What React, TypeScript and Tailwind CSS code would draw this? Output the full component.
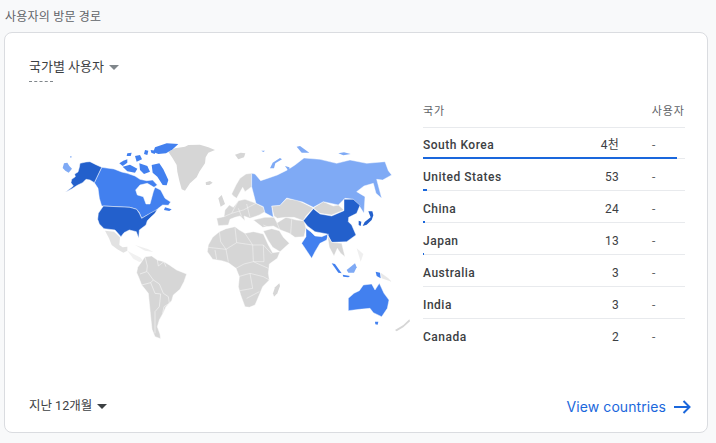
const GRAY = "#d6d6d6";
const LIGHT = "#7faaf5";
const MID = "#4280ef";
const DARK = "#2360cc";

const rows = [
  { name: "South Korea", value: "4천", bar: 254 },
  { name: "United States", value: "53", bar: 4 },
  { name: "China", value: "24", bar: 2 },
  { name: "Japan", value: "13", bar: 1 },
  { name: "Australia", value: "3", bar: 0 },
  { name: "India", value: "3", bar: 0 },
  { name: "Canada", value: "2", bar: 0 },
];

function WorldMap() {
  return (
    <svg width="380" height="210" viewBox="40 130 380 210" className="block">
      <g transform="translate(40 130) scale(0.33333)" stroke="#fff" strokeWidth="1.5" strokeLinejoin="round">
        {/* Greenland, Iceland */}
        <polygon fill={GRAY} stroke="none" points="385,65 405,55 435,50 445,45 480,44 505,52 525,60 505,68 497,82 495,100 478,125 470,142 450,160 435,182 425,178 418,152 412,125 410,105 398,85" />
        <polygon fill={GRAY} stroke="none" points="497,157 510,153 518,158 508,165 498,165" />
        {/* Mexico + Central America */}
        <polygon fill={GRAY} opacity="0.7" stroke="none" points="195,302 222,305 240,322 238,345 248,352 262,350 262,362 250,368 232,358 215,345 207,325" />
        <polygon fill={GRAY} opacity="0.35" stroke="none" points="262,362 280,372 300,382 310,392 298,396 280,386" />
        <polygon fill={GRAY} opacity="0.4" stroke="none" points="285,345 325,358 340,366 315,362" />
        {/* South America */}
        <polygon fill={GRAY} points="293,412 305,395 315,380 335,378 352,390 372,395 388,405 410,420 440,432 432,455 420,478 400,495 395,512 378,530 370,548 358,570 352,590 360,612 362,626 345,620 336,598 332,560 328,520 325,490 305,465 296,442 290,428" />
        <polyline fill="none" points="315,380 322,408 320,425 300,432" />
        <polyline fill="none" points="322,425 340,450 332,458 305,465" />
        <polyline fill="none" points="340,450 358,462 370,490 385,500 388,520 372,530 368,550" />
        <polyline fill="none" points="332,458 345,490 362,492 358,530 345,545 345,610" />
        <polyline fill="none" points="352,390 355,408 372,395" />
        <polyline fill="none" points="372,395 378,410" />
        {/* Canada */}
        <polygon fill={MID} points="185,112 222,117 245,126 262,130 285,138 300,148 320,152 338,150 352,165 342,172 322,160 300,165 287,180 292,195 310,200 318,222 330,222 340,185 345,172 362,180 375,205 392,216 385,226 368,225 355,235 342,248 322,255 305,265 298,248 290,238 270,232 185,228 178,205 174,175 163,158" />
        <polygon fill={MID} stroke="none" points="238,100 250,92 262,88 262,98 248,108" />
        <polygon fill={MID} stroke="none" points="248,110 270,104 292,116 285,128 262,124" />
        <polygon fill={MID} stroke="none" points="262,70 275,68 272,78 260,78" />
        <polygon fill={MID} stroke="none" points="285,78 300,75 306,88 290,95" />
        <polygon fill={MID} stroke="none" points="298,100 322,108 330,125 312,132 300,120" />
        <polygon fill={MID} stroke="none" points="315,60 325,62 322,75 312,72" />
        <polygon fill={MID} stroke="none" points="335,105 358,100 370,118 385,150 380,166 368,165 352,140 338,128" />
        <polygon fill={MID} stroke="none" points="345,52 380,40 415,42 398,58 378,70 355,72 340,66" />
        <polygon fill={MID} stroke="none" points="332,60 348,62 344,72 334,68" />
        <polygon fill={MID} stroke="none" points="375,232 395,238 388,243 372,240" />
        {/* Alaska */}
        <polygon fill={DARK} points="120,100 138,96 150,95 168,104 185,112 163,158 150,150 138,148 128,158 112,166 96,176 76,187 100,168 93,158 95,148 106,140 104,132 114,126 118,112" />
        <polygon fill={LIGHT} stroke="none" points="72,100 82,98 88,108 96,116 86,128 76,122 68,114" />
        <polygon fill={LIGHT} stroke="none" points="90,78 96,80 92,84" />
        {/* USA */}
        <polygon fill={DARK} points="190,228 270,232 290,238 298,250 305,265 330,250 352,238 345,250 332,262 322,272 318,285 298,300 296,325 289,305 268,300 252,308 243,320 225,300 192,296 178,282 173,268 175,250" />
      </g>
      <g transform="translate(200 130) scale(0.33333)" stroke="#fff" strokeWidth="1.3" strokeLinejoin="round">
        {/* Europe */}
        <polygon fill={GRAY} stroke="none" points="105,74 122,68 136,70 132,82 115,88" />
        <polygon fill={GRAY} stroke="none" points="55,205 65,195 75,222 62,230" />
        <polygon fill={GRAY} points="95,192 108,165 120,145 138,132 155,130 155,170 135,185 128,172 118,190 110,205 100,198" />
        <polygon fill={GRAY} points="75,240 88,225 100,232 115,212 135,208 168,220 190,232 195,245 178,255 150,265 132,258 135,272 120,258 105,262 90,268 85,285 55,287 50,265 72,260" />
        <polyline fill="none" points="72,260 95,250 115,212" />
        <polyline fill="none" points="95,250 130,240 168,220" />
        <polyline fill="none" points="115,235 125,260" />
        <polyline fill="none" points="140,222 150,262" />
        {/* Africa */}
        <polygon fill={GRAY} points="25,345 38,322 58,305 78,296 105,290 118,300 135,310 160,305 190,312 205,345 218,368 240,365 232,385 208,402 205,430 208,450 188,470 180,490 165,525 148,532 135,530 122,495 115,470 118,440 108,415 85,398 65,392 38,388 22,365" />
        <polyline fill="none" points="58,305 62,335 78,358 25,352" />
        <polyline fill="none" points="105,292 110,338 78,358 85,395" />
        <polyline fill="none" points="110,338 158,345 160,395 132,402 108,415" />
        <polyline fill="none" points="135,310 158,345 190,345 215,372" />
        <polyline fill="none" points="160,395 205,415" />
        <polyline fill="none" points="115,440 150,430 190,440 208,450" />
        <polyline fill="none" points="150,430 158,475 120,482" />
        <polyline fill="none" points="140,505 178,485" />
        <polyline fill="none" points="45,360 50,388" />
        <polyline fill="none" points="190,345 192,395 160,395" />
        <polygon fill={GRAY} stroke="none" points="225,472 238,460 240,468 232,490 222,500 219,490" />
        {/* Middle East + Central/South Asia */}
        <polygon fill={GRAY} points="190,303 215,296 238,302 250,322 268,340 240,365 218,352 205,332" />
        <polygon fill={GRAY} points="160,270 195,262 222,262 232,278 258,262 290,270 312,272 318,295 312,320 285,322 268,310 242,300 220,288 188,292" />
        <polyline fill="none" points="225,265 240,300" />
        <polyline fill="none" points="275,268 272,312" />
        <polyline fill="none" points="190,285 215,296" />
        <polygon fill={GRAY} points="215,228 240,226 260,206 290,210 308,218 340,234 318,258 310,272 282,262 258,262 232,265 222,258" />
        <polygon fill={GRAY} points="340,234 370,215 400,228 415,225 432,240 395,255 360,250" />
        {/* Russia */}
        <polygon fill={LIGHT} points="155,130 165,132 182,152 200,146 232,135 262,120 285,105 312,84 360,88 410,100 450,90 500,100 555,95 565,122 575,135 548,150 530,148 545,205 528,190 520,160 492,168 470,185 495,200 492,250 478,228 460,208 435,205 415,225 370,215 340,232 308,216 260,204 240,226 215,228 220,262 195,248 190,230 168,220 155,170" />
        <polygon fill={LIGHT} stroke="none" points="210,115 218,98 240,84 246,88 226,100 222,115" />
        <polygon fill={LIGHT} stroke="none" points="262,118 255,108 268,112 272,140 265,138" />
        <polygon fill={LIGHT} stroke="none" points="290,50 300,48 328,68 305,68" />
        <polygon fill={LIGHT} stroke="none" points="415,70 432,67 452,72 430,76" />
        <polygon fill={LIGHT} stroke="none" points="184,62 195,62 190,66" />
        {/* China */}
        <polygon fill={DARK} points="340,236 360,252 395,258 432,242 432,208 460,208 480,226 470,250 446,262 445,275 455,285 468,315 440,335 395,337 382,312 345,305 322,288 310,272" />
        {/* India */}
        <polygon fill={MID} points="318,295 332,305 345,318 365,320 385,312 380,330 360,340 345,365 335,385 322,365 305,340 318,320" />
        {/* SE Asia */}
        <polygon fill={GRAY} points="382,315 395,337 425,340 435,380 422,370 412,355 402,378 388,352" />
        <polygon fill={GRAY} opacity="0.4" stroke="none" points="470,355 490,372 482,395" />
        <polygon fill={DARK} stroke="none" points="505,244 517,244 520,256 515,270 500,284 488,288 494,276 512,262" />
        <polygon fill={DARK} stroke="none" points="476,272 484,275 482,288 476,285" />
        <polygon fill={MID} stroke="none" points="395,400 405,402 425,430 415,428" />
        <polygon fill={MID} stroke="none" points="428,434 450,438 445,442 430,440" />
        <polygon fill={LIGHT} stroke="none" points="440,420 465,400 470,412 462,428 445,428" />
        <polygon fill={MID} stroke="none" points="527,425 540,428 542,445 530,438" />
        <polygon fill={GRAY} stroke="none" opacity="0.55" points="542,428 565,445 575,455 545,445" />
        {/* Australia */}
        <polygon fill={MID} points="445,505 462,490 478,482 490,465 515,462 525,480 538,460 552,490 567,510 562,535 545,560 520,548 510,535 478,538 445,542" />
        <polygon fill={MID} stroke="none" points="525,575 535,575 533,584 526,583" />
        <polygon fill={GRAY} stroke="none" points="585,600 610,585 628,568 630,574 610,592 590,604" />
      </g>
    </svg>
  );
}

export default function App() {
  return (
    <div
      className="w-[716px] h-[443px] overflow-hidden bg-[#f8f9fa] text-[#3c4043]"
      style={{ fontFamily: 'Roboto, "Noto Sans CJK KR", sans-serif' }}
    >
      <h2 className="h-[32px] pl-[5px] pt-[9px] text-[12px] leading-[16px] tracking-[0.2px] font-normal text-[#5f6368]">
        사용자의 방문 경로
      </h2>
      <div className="ml-1 w-[704px] h-[401px] bg-white border border-[#dadce0] rounded-[8px] flex flex-col">
        <div className="pl-[24px] pt-[25px] h-[62px]">
          <div className="flex items-center gap-[5px] h-[18px]">
            <span className="text-[13px] leading-[18px] text-[#3c4043]">국가별 사용자</span>
            <span className="w-0 h-0 border-x-[5.5px] border-x-transparent border-t-[5.5px] border-t-[#80868b]" />
          </div>
          <div className="w-[24px] mt-[5px] border-t border-dashed border-[#80868b]" />
        </div>
        <div className="flex">
          <div className="ml-[35px] mt-[35px] w-[380px] shrink-0">
            <WorldMap />
          </div>
          <div className="ml-[3px] w-[262px]">
            <div className="h-[33px] pt-[9px] flex justify-between border-b border-[#e8eaed] text-[11px] leading-[16px] tracking-[1px] text-[#5f6368]">
              <span>국가</span>
              <span>사용자</span>
            </div>
            {rows.map((r, i) => (
              <div
                key={r.name}
                className={`relative pt-[4px] flex items-center text-[12px] ${i === 0 ? "h-[31px]" : "h-[32px]"} ${i < rows.length - 1 ? "border-b border-[#e8eaed]" : ""}`}
              >
                <span className="w-[160px] font-medium tracking-[0.5px] text-[#3c4043]">{r.name}</span>
                <span className="w-[36px] text-right tracking-[0.2px] text-[#3c4043]">{r.value}</span>
                <span className="ml-[33px] text-[#5f6368]">-</span>
                {r.bar > 0 && (
                  <span className="absolute left-0 bottom-[-1px] h-[2px] bg-[#1a67dc]" style={{ width: r.bar }} />
                )}
              </div>
            ))}
          </div>
        </div>
        <div className="mt-auto h-[43px] pl-[24px] pr-[16px] flex justify-between items-start">
          <div className="flex items-center gap-[5px] h-[18px] mt-[8px]">
            <span className="text-[12.5px] leading-[18px] text-[#3c4043]">지난 12개월</span>
            <span className="w-0 h-0 border-x-[5px] border-x-transparent border-t-[5px] border-t-[#3c4043]" />
          </div>
          <div className="flex items-center gap-[8px] h-[20px] mt-[8px] text-[#1a67dc]">
            <span className="text-[14px] leading-[20px] tracking-[0.08px]" style={{ fontFamily: 'Inter, sans-serif' }}>View countries</span>
            <svg width="17" height="16" viewBox="0 0 17 16" fill="none" stroke="#1a67dc" strokeWidth="2">
              <path d="M0 8H15.5M9.5 2l6 6-6 6" />
            </svg>
          </div>
        </div>
      </div>
    </div>
  );
}
